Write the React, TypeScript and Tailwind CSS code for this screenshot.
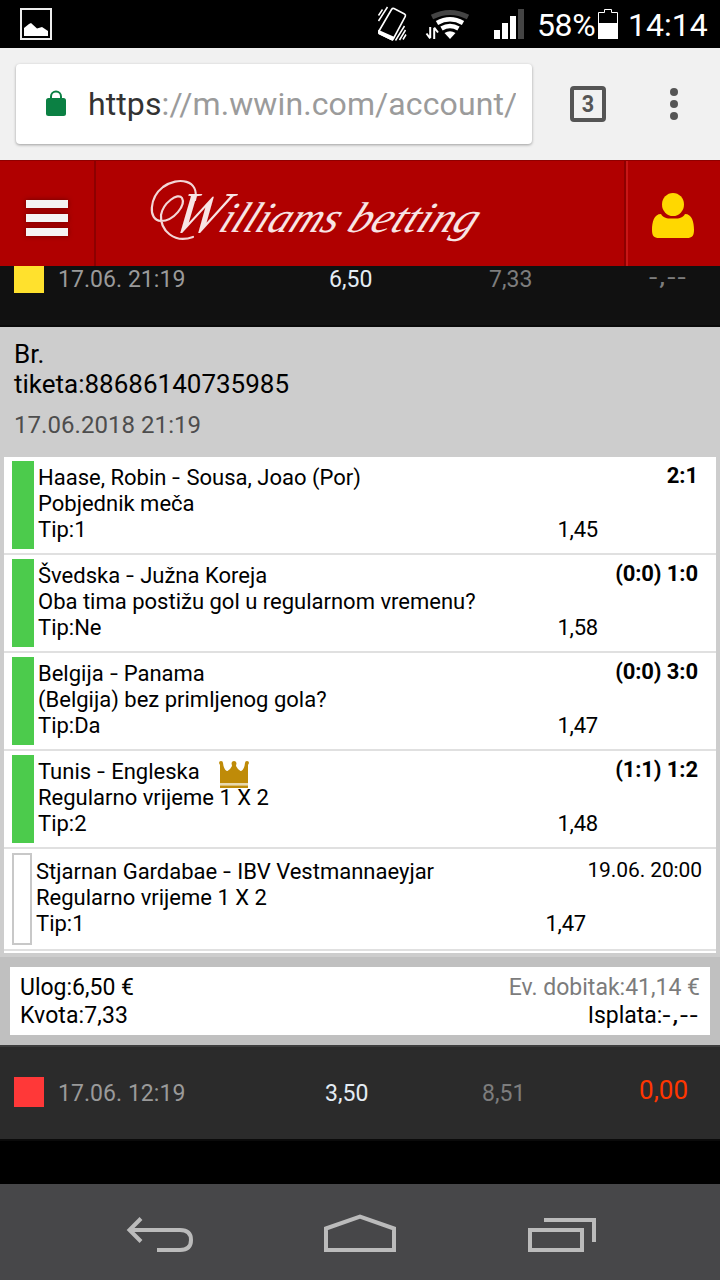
import { ReactNode } from 'react';

type Bet = {
  match: string;
  market: string;
  tip: string;
  odds: string;
  result: string;
  banker?: boolean;
};

const bets: Bet[] = [
  { match: 'Haase, Robin - Sousa, Joao (Por)', market: 'Pobjednik meča', tip: '1', odds: '1,45', result: '2:1' },
  { match: 'Švedska - Južna Koreja', market: 'Oba tima postižu gol u regularnom vremenu?', tip: 'Ne', odds: '1,58', result: '(0:0) 1:0' },
  { match: 'Belgija - Panama', market: '(Belgija) bez primljenog gola?', tip: 'Da', odds: '1,47', result: '(0:0) 3:0' },
  { match: 'Tunis - Engleska', market: 'Regularno vrijeme 1 X 2', tip: '2', odds: '1,48', result: '(1:1) 1:2', banker: true },
];

function StatusBar() {
  return (
    <div className="flex h-12 shrink-0 items-center bg-black pl-5 pr-3 text-[32px] leading-none text-white">
      <svg width="32" height="32" viewBox="0 0 32 32" fill="none">
        <rect x="1" y="1" width="30" height="30" stroke="#eee" strokeWidth="2" />
        <path d="M4 28V20L9 16L11 15L17 20.5L22 19L28 23V28Z" fill="#fff" />
      </svg>
      <svg className="ml-auto" width="150" height="48" viewBox="376 0 150 48" fill="none">
        <g stroke="#fff" strokeWidth="1.6">
          <path d="M391.5 9.5Q392.5 8 394 8.6L404.500 14Q406 15 405.300 16.500L393.500 38.500Q392.500 40 391 39.300L379.500 33.500Q378.200 32.500 379 31Z" />
          <path d="M379 31L393.500 37.500L392.500 40L379 33.500Z" fill="#fff" />
          <path d="M378.500 15.500L382.500 9.500M378.500 21L387.500 7M395.500 40.500L404.500 26M399.500 40L405.500 30M403 39.500L406 34.500" strokeWidth="1.5" />
          <path d="M430.200 27V38M426.500 33.500L430.200 38.500M434.200 39V28M438 32.500L434.200 27.500" strokeWidth="2" />
        </g>
        <path d="M432 17Q450 8 468 17" stroke="#444" strokeWidth="5" />
        <path d="M437 23Q450 15.500 463 23M441.500 28.500Q450 23.500 458.500 28.500" stroke="#fff" strokeWidth="4.500" />
        <path d="M444.500 33Q450 29.500 455.500 33L450 39Z" fill="#fff" />
        <path d="M494 30h6v9h-6zM502 23h6v16h-6zM510 16h6v23h-6z" fill="#fff" />
        <path d="M518 9h6v30h-6z" fill="#444" />
      </svg>
      <span className="ml-[11px] w-[60px] whitespace-nowrap pt-0.5 tracking-[-0.4px]">58%</span>
      <svg className="ml-px" width="20" height="30" viewBox="0 0 20 30">
        <path d="M.5 14V3.500H6.500V.5H13.500V3.500H19.500V14" fill="none" stroke="#fff" />
        <path d="M0 14H20V30H0Z" fill="#fff" />
      </svg>
      <span className="ml-2.5 w-20 whitespace-nowrap pt-0.5">14:14</span>
    </div>
  );
}

function BrowserBar() {
  return (
    <div className="flex h-28 shrink-0 items-center bg-[#f1f1f1] pl-4">
      <div className="flex h-20 w-[516px] items-center rounded bg-white pl-[30px] pr-4 shadow-[0_1px_3px_rgba(0,0,0,0.35)]">
        <svg className="mb-0.5 shrink-0" width="20" height="26" viewBox="0 0 20 26">
          <path d="M5 9V6.500a5 5 0 0 1 10 0V9" fill="none" stroke="#0b8043" strokeWidth="2" />
          <rect y="8" width="20" height="18" rx="2.500" fill="#0b8043" />
        </svg>
        <div className="ml-[22px] flex-1 overflow-hidden whitespace-nowrap text-[32px] leading-10 tracking-[0.1px] text-[#9b9b9b]">
          <span className="text-[#333]">https</span>://m.wwin.com/account/
        </div>
      </div>
      <div className="ml-[38px] flex size-9 items-center justify-center rounded border-4 border-[#555] text-2xl font-bold leading-none text-[#555]">
        <span className="scale-x-90">3</span>
      </div>
      <div className="ml-16 flex flex-col gap-1">
        <div className="size-2 rounded-full bg-[#555]" />
        <div className="size-2 rounded-full bg-[#555]" />
        <div className="size-2 rounded-full bg-[#555]" />
      </div>
    </div>
  );
}

function Logo() {
  return (
    <svg width="344" height="105" viewBox="146 161 344 105">
      <path
        d="M195 200C200 180 178 176 163 187C150 197 147 220 161 221C174 221 186 205 182 198C178 192 163 203 161 215C160 230 174 244 193 237"
        fill="none"
        stroke="#f3d6d6"
        strokeWidth="2.2"
        strokeLinecap="round"
      />
      <g fill="#f8e4e4" className="font-['Liberation_Serif',serif] text-[43px] italic">
        <text transform="translate(168 232) skewX(-24)" textLength="167" lengthAdjust="spacingAndGlyphs">
          <tspan className="text-[58px]">W</tspan>illiams
        </text>
        <text transform="translate(345 232) skewX(-24)" textLength="128" lengthAdjust="spacingAndGlyphs">
          betting
        </text>
      </g>
    </svg>
  );
}

function SiteHeader() {
  return (
    <header className="relative z-10 flex h-[106px] shrink-0 border-t border-[#8f0000] bg-[#b00000]">
      <div className="flex w-24 flex-col justify-center gap-1.5 border-r-2 border-[#8d0000] pl-[26px] pt-[9px]">
        <div className="h-2 w-[42px] bg-[#f4f4f4] shadow-[0_0_5px_rgba(60,0,0,0.6)]" />
        <div className="h-2 w-[42px] bg-[#f4f4f4] shadow-[0_0_5px_rgba(60,0,0,0.6)]" />
        <div className="h-2 w-[42px] bg-[#f4f4f4] shadow-[0_0_5px_rgba(60,0,0,0.6)]" />
      </div>
      <div className="flex-1 pl-[50px]">
        <Logo />
      </div>
      <div className="w-24 border-l-2 border-[#8d0000]">
        <div className="h-full border-l-2 border-[#c81616] pl-6 pt-[31px]">
          <svg width="42" height="46" viewBox="0 0 42 46" fill="#ffd800">
            <ellipse cx="21" cy="12.500" rx="11" ry="11.500" />
            <path d="M9 22C12 27 17 26.500 21 26.500C25 26.500 30 27 33 22C40 22 42 30 42 38C42 44 40 46 35 46H7C2 46 0 44 0 38C0 30 2 22 9 22Z" />
          </svg>
        </div>
      </div>
    </header>
  );
}

function Crown() {
  return (
    <svg className="-mb-1.5 ml-[19px] mt-px" width="30" height="28" viewBox="0 0 30 28" fill="#bf8b08">
      <path d="M1 23V5L0 3Q0 1 2 1Q4 1 4 3L4.500 6Q6 11 8.500 11Q11 10 13 6L12.500 3Q13 1 15 1Q17 1 17.500 3L17 6Q19 10 21.500 11Q24 11 25.500 6L26 3Q26 1 28 1Q30 1 30 3L29 5V23Z" />
      <path d="M1 23H29V25.500H1Z" fill="#e8d9ae" />
      <path d="M1 25.500H29V28H1Z" />
    </svg>
  );
}

// "Home - Away" with a slightly wider dash
function MatchName({ name }: { name: string }) {
  const [home, away] = name.split(' - ');
  return (
    <span className="whitespace-pre">
      {home} <span className="mx-[1.5px] inline-block scale-x-130">-</span> {away}
    </span>
  );
}

function BetRow({ bet }: { bet: Bet }) {
  return (
    <div className="flex h-[98px] border-b-2 border-[#e0e0e0] py-1 pl-2">
      <div className="w-[22px] bg-[#4ccb4c]" />
      <div className="ml-1 w-[560px] pt-1">
        <div className="flex h-[26px]">
          <MatchName name={bet.match} />
          {bet.banker && <Crown />}
        </div>
        <div>{bet.market}</div>
        <div className="flex justify-between">
          <span>Tip:{bet.tip}</span>
          <span className="tracking-[-0.2px]">{bet.odds}</span>
        </div>
      </div>
      <div className="-ml-10 flex-1 pr-[18px] pt-0.5 text-right font-bold tracking-[-0.1px]">{bet.result}</div>
    </div>
  );
}

function TicketRow({ className, children }: { className: string; children: ReactNode }) {
  return (
    <div className={`flex h-24 shrink-0 items-start border-y-2 pl-3.5 pr-8 pt-[30px] text-[23px] leading-[30px] ${className}`}>
      {children}
    </div>
  );
}

function Ticket() {
  return (
    <section className="bg-[#cdcdcd] text-black">
      <div className="h-[130px] px-3.5 pt-3 text-[26px] leading-[30px]">
        <div>Br.</div>
        <div>tiketa:88686140735985</div>
        <div className="mt-[11px] text-2xl leading-[30px] tracking-[0.05px] text-[#4d4d4d]">17.06.2018 21:19</div>
      </div>

      <div className="mx-1 mb-1 bg-white pb-0.5 text-[22px] leading-[26px]">
        {bets.map((bet) => (
          <BetRow key={bet.match} bet={bet} />
        ))}
        <div className="flex h-[102px] border-b-2 border-[#e0e0e0] py-1 pl-2">
          <div className="w-5 border-2 border-[#c8c8c8]" />
          <div className="ml-1 w-[550px] pt-1.5">
            <MatchName name="Stjarnan Gardabae - IBV Vestmannaeyjar" />
            <div>Regularno vrijeme 1 X 2</div>
            <div className="flex justify-between">
              <span>Tip:1</span>
              <span className="tracking-[-0.2px]">1,47</span>
            </div>
          </div>
          <div className="-ml-4 flex-1 whitespace-nowrap pr-3.5 pt-1 text-right text-[21px] tracking-[-0.1px]">19.06. 20:00</div>
        </div>
      </div>

      <div className="h-[88px] bg-[#c0c0c0] p-2.5">
        <div className="flex h-[68px] justify-between bg-white px-2.5 pt-[7px] text-[23px] leading-7">
          <div>
            <div>Ulog:6,50 €</div>
            <div className="tracking-[0.1px]">Kvota:7,33</div>
          </div>
          <div className="text-right">
            <div className="text-[#7c7c7c]">Ev. dobitak:41,14 €</div>
            <div>
              Isplata:<span className="ml-2 inline-block origin-right scale-x-125 tracking-[1.5px]">-,--</span>
            </div>
          </div>
        </div>
      </div>
    </section>
  );
}

function NavBar() {
  return (
    <nav className="flex h-24 shrink-0 items-center bg-[#474749] pl-[126px] pt-1">
      <svg width="68" height="40" viewBox="126 1214 68 40" fill="none" stroke="#bbb" strokeWidth="4">
        <path d="M130 1230H180Q191 1230 191 1240Q191 1250 180 1250H157M141 1218.500L129.500 1230L141 1241.500" />
      </svg>
      <svg className="ml-[130px]" width="72" height="40" viewBox="324 1214 72 40" fill="none" stroke="#bbb" strokeWidth="4">
        <path d="M326 1228.500L360 1216.500L394 1228.500V1250H326Z" />
      </svg>
      <svg className="ml-[132px]" width="68" height="40" viewBox="528 1214 68 40" fill="none" stroke="#bbb" strokeWidth="4">
        <path d="M530 1230H582V1250H530ZM544 1220H594V1242" />
      </svg>
    </nav>
  );
}

export default function App() {
  return (
    <main className="flex h-[1280px] w-[720px] flex-col overflow-hidden bg-black font-[Roboto,sans-serif]">
      <StatusBar />
      <BrowserBar />
      <SiteHeader />

      <div className="-mt-[35px] shrink-0">
        <TicketRow className="border-[#0a0a0a] bg-[#111]">
          <div className="size-[30px] bg-[#ffe12d]" />
          <span className="ml-3.5 w-[271px] pt-0.5 tracking-[0.05px] text-[#9a9a9a]">17.06. 21:19</span>
          <span className="w-40 pt-0.5 text-[#e4ecf4]">6,50</span>
          <span className="pt-0.5 text-[#7d7d7d]">7,33</span>
          <span className="ml-auto origin-right scale-x-130 tracking-[1.5px] text-[#7d7d7d]">-,--</span>
        </TicketRow>
        <Ticket />
        <TicketRow className="border-b-[#0a0a0a] border-t-[#3d3d3d] bg-[#2b2b2b]">
          <div className="size-[30px] bg-[#ff3838]" />
          <span className="ml-3.5 w-[267px] pt-0.5 tracking-[0.05px] text-[#9a9a9a]">17.06. 12:19</span>
          <span className="w-[157px] pt-0.5 text-[#e4ecf4]">3,50</span>
          <span className="pt-0.5 text-[#7d7d7d]">8,51</span>
          <span className="ml-auto -mt-0.5 text-[26px] text-[#ff3600]">0,00</span>
        </TicketRow>
      </div>

      <div className="flex-1" />
      <NavBar />
    </main>
  );
}
